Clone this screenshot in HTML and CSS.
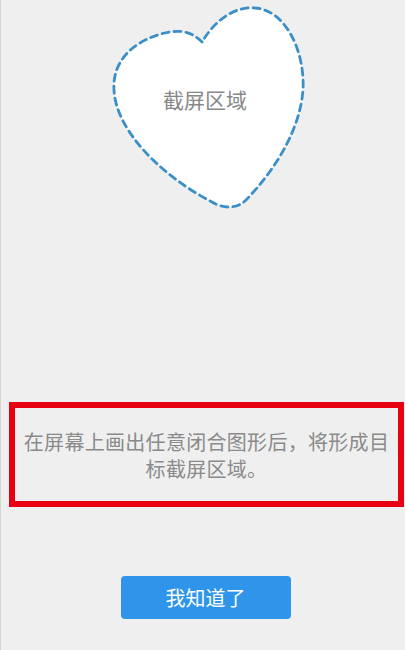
FILE: index.html
```html
<!DOCTYPE html>
<html lang="zh-CN">

<head>
  <meta charset="UTF-8" />
  <meta name="viewport" content="width=device-width, initial-scale=1.0" />
  <title>截屏提示</title>
  <link rel="stylesheet" href="styles.css">
</head>

<body>
  <div class="screen">

    <!-- Heart shaped capture area -->
    <div class="shape-area">
      <svg class="heart" width="405" height="215" viewBox="0 0 405 215">
        <path d="M202,42 C190,30 178,30 165,33 C135,40 112,60 114,90 C116,130 160,175 212,202 C222,208 236,210 246,200 C275,170 300,130 303,90 C305,50 285,10 255,8 C235,6 215,20 202,42 Z"
          fill="#ffffff" stroke="#3a8fc6" stroke-width="2.8" stroke-dasharray="7 5" stroke-linecap="round" />
        <text x="205" y="108" text-anchor="middle" class="heart-label">截屏区域</text>
      </svg>
    </div>

    <!-- Hint text -->
    <div class="tip-box">
      <p>在屏幕上画出任意闭合图形后，将形成目标截屏区域。</p>
    </div>

    <div class="actions">
      <button class="ok-btn">我知道了</button>
    </div>

  </div>
</body>

</html>
```

FILE: styles.css
```css
body {
  margin: 0;
  padding: 0;
  font-family: "Noto Sans CJK SC", "Noto Sans", sans-serif;
  background-color: #efefef;
}

.screen {
  width: 404px;
  height: 650px;
  border-left: 1px solid #d4d4d4;
  background-color: #efefef;
  display: flex;
  flex-direction: column;
  overflow: hidden;
}

.shape-area {
  height: 215px;
  margin-left: -1px;
}

.heart {
  display: block;
}

.heart-label {
  font-family: "Noto Sans CJK SC", sans-serif;
  font-size: 21px;
  fill: #888888;
}

/* Red highlighted hint */
.tip-box {
  margin-top: 187px;
  margin-left: 8px;
  width: 383px;
  height: 93px;
  border: 6px solid #e60012;
  display: flex;
  align-items: center;
  justify-content: center;
}

.tip-box p {
  margin: 0;
  padding: 0 2px;
  font-size: 20px;
  letter-spacing: 0.3px;
  line-height: 27px;
  color: #8a8a8a;
  text-align: center;
}

.actions {
  margin-top: 69px;
  display: flex;
  justify-content: center;
  padding-left: 5px;
}

.ok-btn {
  width: 170px;
  height: 43px;
  border: none;
  border-radius: 4px;
  background-color: #2f95ea;
  color: #ffffff;
  font-family: "Noto Sans CJK SC", sans-serif;
  font-size: 20px;
  cursor: pointer;
}
```
